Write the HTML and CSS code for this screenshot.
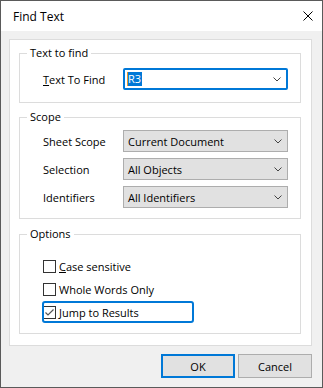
FILE: index.html
```html
<!DOCTYPE html>
<html lang="en">
<head>
  <meta charset="UTF-8">
  <title>Find Text</title>
  <link rel="stylesheet" href="styles.css">
</head>
<body>
  <div class="window">
    <div class="titlebar">
      <span class="title">Find Text</span>
      <svg class="close" width="10" height="10" viewBox="0 0 10 10">
        <path d="M0.5 0.5 L9.5 9.5 M9.5 0.5 L0.5 9.5" stroke="#000" stroke-width="1"/>
      </svg>
    </div>

    <div class="client">
      <div class="panel">
        <fieldset class="group">
          <legend>Text to find</legend>
          <div class="group-body find-body">
            <div class="field">
              <label><u>T</u>ext To Find</label>
              <div class="combo combo-edit">
                <span class="sel">R3</span>
                <svg class="arrow" width="8" height="5" viewBox="0 0 8 5"><polyline points="0.5,0.5 4,4 7.5,0.5" fill="none" stroke="#444"/></svg>
              </div>
            </div>
          </div>
        </fieldset>

        <fieldset class="group">
          <legend>Scope</legend>
          <div class="group-body scope-body">
            <div class="field">
              <label>Sheet Scope</label>
              <div class="combo">
                <span>Current Document</span>
                <svg class="arrow" width="8" height="5" viewBox="0 0 8 5"><polyline points="0.5,0.5 4,4 7.5,0.5" fill="none" stroke="#444"/></svg>
              </div>
            </div>
            <div class="field">
              <label>Selection</label>
              <div class="combo">
                <span>All Objects</span>
                <svg class="arrow" width="8" height="5" viewBox="0 0 8 5"><polyline points="0.5,0.5 4,4 7.5,0.5" fill="none" stroke="#444"/></svg>
              </div>
            </div>
            <div class="field">
              <label>Identifiers</label>
              <div class="combo">
                <span>All Identifiers</span>
                <svg class="arrow" width="8" height="5" viewBox="0 0 8 5"><polyline points="0.5,0.5 4,4 7.5,0.5" fill="none" stroke="#444"/></svg>
              </div>
            </div>
          </div>
        </fieldset>

        <fieldset class="group">
          <legend>Options</legend>
          <div class="group-body options-body">
            <div class="check">
              <span class="box"></span>
              <span><u>C</u>ase sensitive</span>
            </div>
            <div class="check">
              <span class="box"></span>
              <span>Whole Words Only</span>
            </div>
            <div class="check focused">
              <span class="box">
                <svg width="11" height="11" viewBox="0 0 11 11"><polyline points="1.5,5.5 4,8 9.5,2.5" fill="none" stroke="#555" stroke-width="1.2"/></svg>
              </span>
              <span><u>J</u>ump to Results</span>
            </div>
          </div>
        </fieldset>
      </div>

      <div class="buttons">
        <button class="btn btn-default">OK</button>
        <button class="btn">Cancel</button>
      </div>
    </div>
  </div>
</body>
</html>
```

FILE: styles.css
```css
* {
  box-sizing: border-box;
}

body {
  margin: 0;
  font-family: "Open Sans", "Noto Sans", sans-serif;
  font-size: 11px;
  color: #000;
}

/* 窗口 */
.window {
  width: 323px;
  height: 388px;
  border: 1px solid #5a5a5a;
  background: #f0f0f0;
  display: flex;
  flex-direction: column;
}

.titlebar {
  height: 30px;
  background: #fff;
  display: flex;
  align-items: center;
  justify-content: space-between;
  padding: 0 9px 0 12px;
}

.title {
  font-size: 12px;
}

.close {
  display: block;
}

.client {
  flex: 1;
  display: flex;
  flex-direction: column;
  padding: 8px 10px 9px 8px;
}

/* 白色面板 */
.panel {
  background: #fff;
  border: 1px solid #dcdcdc;
  padding: 5px 10px 11px 9px;
  display: flex;
  flex-direction: column;
}

.group {
  margin: 0;
  padding: 0;
  border: 1px solid #dcdcdc;
  min-width: 0;
}

.group + .group {
  margin-top: 6px;
}

.group:last-child {
  margin-top: 7px;
}

.group legend {
  margin-left: 7px;
  padding: 0 3px;
  line-height: 16px;
}

.group-body {
  display: flex;
  flex-direction: column;
}

.find-body {
  padding: 7px 12px 12px 22px;
}

.scope-body {
  padding: 5px 12px 10px 22px;
  gap: 6px;
}

.options-body {
  padding: 13px 12px 10px 22px;
  gap: 1px;
}

/* 下拉框 */
.field {
  display: flex;
  align-items: center;
}

.field label {
  width: 81px;
  padding-left: 1px;
}

.combo {
  width: 165px;
  height: 22px;
  border: 1px solid #adadad;
  background: #e1e1e1;
  display: flex;
  align-items: center;
  justify-content: space-between;
  padding: 0 5px 0 4px;
}

.combo-edit {
  background: #fff;
  border: 2px solid #0078d7;
  border-radius: 2px;
  padding-left: 2px;
}

.sel {
  background: #0078d7;
  color: #fff;
  line-height: 14px;
  padding: 0 1px 0 0;
  border-left: 1px solid #e8962a;
}

.arrow {
  display: block;
}

/* 复选框 */
.check {
  width: 152px;
  height: 22px;
  display: flex;
  align-items: center;
  gap: 3px;
  padding-left: 1px;
}

.check .box {
  width: 13px;
  height: 13px;
  border: 1px solid #333;
  background: #fff;
  display: flex;
  align-items: center;
  justify-content: center;
}

.check .box svg {
  display: block;
}

.check.focused {
  outline: 2px solid #0078d7;
  outline-offset: -2px;
  border-radius: 3px;
}

/* 按钮 */
.buttons {
  display: flex;
  justify-content: flex-end;
  gap: 3px;
  margin-top: 8px;
}

.btn {
  width: 74px;
  height: 24px;
  border: 1px solid #adadad;
  background: #e1e1e1;
  font-family: inherit;
  font-size: 11px;
  color: #000;
  padding: 0;
}

.btn-default {
  border: 2px solid #0078d7;
}
```
